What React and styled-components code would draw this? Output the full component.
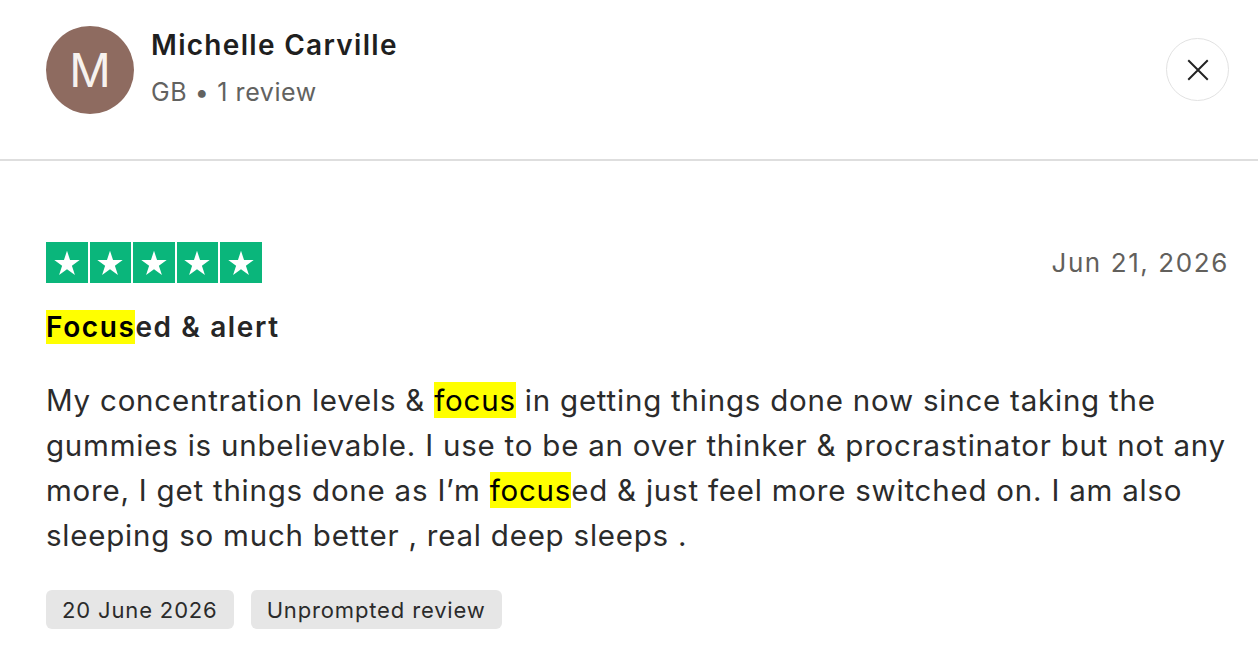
import React from 'react'
import styled, { createGlobalStyle } from 'styled-components'

const Global = createGlobalStyle`
  body {
    margin: 0;
    background: #fff;
    font-family: Inter, "Noto Sans", "Liberation Sans", sans-serif;
    color: #2b2b2b;
  }
`

const Page = styled.div`
  width: 1258px;
  height: 658px;
  overflow: hidden;
  background: #fff;
`

const Header = styled.div`
  height: 161px;
  box-sizing: border-box;
  padding: 26px 29px 0 46px;
  display: flex;
  align-items: flex-start;
  border-bottom: 2px solid #dedede;
`

const Avatar = styled.div`
  width: 88px;
  height: 88px;
  border-radius: 50%;
  background: #8e6b60;
  color: #f7f2ee;
  display: flex;
  align-items: center;
  justify-content: center;
  font-size: 46px;
  font-weight: 400;
  flex-shrink: 0;
`

const Who = styled.div`
  margin-left: 17px;
  padding-top: 1px;
  flex: 1;
`

const Name = styled.div`
  font-size: 28px;
  font-weight: 600;
  color: #1f1f1f;
  line-height: 36px;
  letter-spacing: 1.3px;
`

const Meta = styled.div`
  margin-top: 13px;
  font-size: 25px;
  color: #626260;
  line-height: 32px;
  letter-spacing: 0.6px;
`

const CloseButton = styled.button`
  width: 63px;
  height: 63px;
  margin-top: 12px;
  border-radius: 50%;
  border: 1.5px solid #e2e2e2;
  background: #fff;
  display: flex;
  align-items: center;
  justify-content: center;
  padding: 0;
  cursor: pointer;
`

const Body = styled.div`
  padding: 81px 29px 0 46px;
`

const TopRow = styled.div`
  display: flex;
  justify-content: space-between;
  align-items: center;
`

const Stars = styled.div`
  display: flex;
  gap: 2px;
`

const StarBox = styled.div`
  width: 41.5px;
  height: 41px;
  background: #0ab67b;
  display: flex;
  align-items: center;
  justify-content: center;
`

const DateText = styled.div`
  font-size: 26px;
  color: #62605c;
  letter-spacing: 1.6px;
`

const Title = styled.div`
  margin-top: 25px;
  font-size: 28px;
  font-weight: 600;
  color: #262626;
  line-height: 38px;
  letter-spacing: 1.6px;
`

const Mark = styled.span`
  background: #ffff00;
  color: #000;
`

const Text = styled.p`
  margin: 32px -6px 0 0;
  font-size: 29.5px;
  line-height: 45px;
  color: #2b2b2b;
  letter-spacing: 0.78px;
`

const Tags = styled.div`
  display: flex;
  gap: 17px;
  margin-top: 32px;
`

const Tag = styled.span`
  background: #e6e6e6;
  border-radius: 6px;
  padding: 0 16px;
  height: 39px;
  display: flex;
  align-items: center;
  font-size: 22px;
  color: #2b2b2b;
  letter-spacing: 0.85px;
`

const Star = () => (
  <svg width="28" height="28" viewBox="0 0 24 24">
    <path d="M12 1.5l2.6 7.9h8.3l-6.7 4.9 2.6 7.9L12 17.3l-6.8 4.9 2.6-7.9L1.1 9.4h8.3z" fill="#fff" />
  </svg>
)

export default function App() {
  return (
    <Page>
      <Global />
      <Header>
        <Avatar>M</Avatar>
        <Who>
          <Name>Michelle Carville</Name>
          <Meta>GB • 1 review</Meta>
        </Who>
        <CloseButton aria-label="Close">
          <svg width="26" height="26" viewBox="0 0 24 24" fill="none" stroke="#222" strokeWidth="1.8">
            <path d="M3 3l18 18M21 3L3 21" />
          </svg>
        </CloseButton>
      </Header>
      <Body>
        <TopRow>
          <Stars>
            {[0, 1, 2, 3, 4].map(i => (
              <StarBox key={i}><Star /></StarBox>
            ))}
          </Stars>
          <DateText>Jun 21, 2026</DateText>
        </TopRow>
        <Title><Mark>Focus</Mark>ed &amp; alert</Title>
        <Text>
          My concentration levels &amp; <Mark>focus</Mark> in getting things done now since taking the gummies is unbelievable. I use to be an over thinker &amp; procrastinator but not any more, I get things done as I’m <Mark>focus</Mark>ed &amp; just feel more switched on. I am also sleeping so much better , real deep sleeps .
        </Text>
        <Tags>
          <Tag>20 June 2026</Tag>
          <Tag>Unprompted review</Tag>
        </Tags>
      </Body>
    </Page>
  )
}
